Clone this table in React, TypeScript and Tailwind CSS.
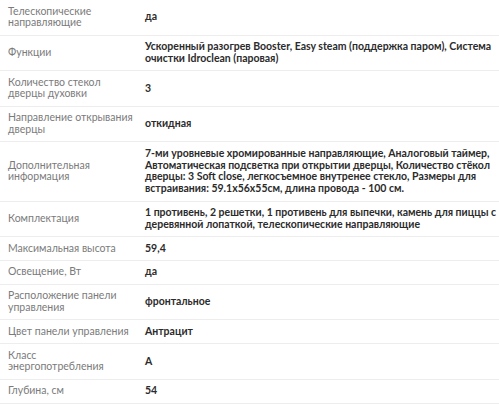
import React from "react";

type Spec = { label: string; value: string };

const specs: Spec[] = [
  { label: "Телескопические направляющие", value: "да" },
  {
    label: "Функции",
    value:
      "Ускоренный разогрев Booster, Easy steam (поддержка паром), Система очистки Idroclean (паровая)",
  },
  { label: "Количество стекол дверцы духовки", value: "3" },
  { label: "Направление открывания дверцы", value: "откидная" },
  {
    label: "Дополнительная информация",
    value:
      "7-ми уровневые хромированные направляющие, Аналоговый таймер, Автоматическая подсветка при открытии дверцы, Количество стёкол дверцы: 3 Soft close, легкосъемное внутренее стекло, Размеры для встраивания: 59.1x56x55см, длина провода - 100 см.",
  },
  {
    label: "Комплектация",
    value:
      "1 противень, 2 решетки, 1 противень для выпечки, камень для пиццы с деревянной лопаткой, телескопические направляющие",
  },
  { label: "Максимальная высота", value: "59,4" },
  { label: "Освещение, Вт", value: "да" },
  { label: "Расположение панели управления", value: "фронтальное" },
  { label: "Цвет панели управления", value: "Антрацит" },
  { label: "Класс энергопотребления", value: "А" },
  { label: "Глубина, см", value: "54" },
];

export default function App() {
  return (
    <div className="w-[499px] h-[406px] overflow-hidden bg-white font-['Lato',sans-serif]">
      {specs.map((s) => (
        <div
          key={s.label}
          className="flex items-center border-b border-[#ededed] py-[5.5px] leading-[11.8px]"
        >
          <div className="w-[145px] shrink-0 pl-2 pr-3 text-[10.5px] text-[#7b7b7b]">
            {s.label}
          </div>
          <div className="flex-1 text-[10.5px] font-bold text-[#2b2b2b]">
            {s.value}
          </div>
        </div>
      ))}
    </div>
  );
}
